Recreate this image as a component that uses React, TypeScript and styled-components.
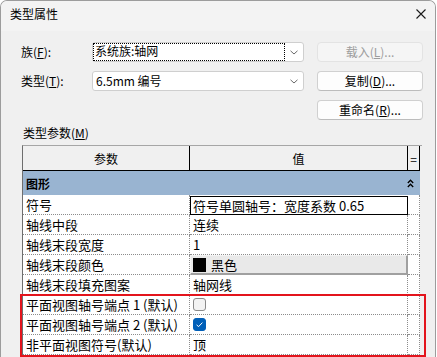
import styled, { createGlobalStyle } from 'styled-components';
import { FC, ReactNode } from 'react';

const GlobalStyle = createGlobalStyle`
  html, body {
    margin: 0;
    padding: 0;
    background: #ffffff;
  }
  body {
    font-family: "Noto Sans CJK SC", "Noto Sans", sans-serif;
    color: #000;
  }
  * { box-sizing: border-box; }
`;

type Param = {
  name: string;
  value?: string;
  kind?: 'text' | 'boxed' | 'color' | 'checkbox';
  checked?: boolean;
};

const params: Param[] = [
  { name: '符号', value: '符号单圆轴号：宽度系数 0.65', kind: 'boxed' },
  { name: '轴线中段', value: '连续' },
  { name: '轴线末段宽度', value: '1' },
  { name: '轴线末段颜色', value: '黑色', kind: 'color' },
  { name: '轴线末段填充图案', value: '轴网线' },
];

const highlighted: Param[] = [
  { name: '平面视图轴号端点 1 (默认)', kind: 'checkbox', checked: false },
  { name: '平面视图轴号端点 2 (默认)', kind: 'checkbox', checked: true },
  { name: '非平面视图符号(默认)', value: '顶' },
];

const CloseIcon = () => (
  <svg width="10" height="10" viewBox="0 0 10 10">
    <path d="M0.5 0.5 L9.5 9.5 M9.5 0.5 L0.5 9.5" stroke="#1a1a1a" strokeWidth="1.1" fill="none" />
  </svg>
);

const ChevronDown = () => (
  <svg width="8" height="5" viewBox="0 0 8 5">
    <path d="M0.5 0.8 L4 4 L7.5 0.8" stroke="#6a6a6a" strokeWidth="1" fill="none" />
  </svg>
);

const CollapseIcon = () => (
  <svg width="7" height="9" viewBox="0 0 7 9">
    <path d="M0.8 4 L3.5 1.2 L6.2 4 M0.8 8 L3.5 5.2 L6.2 8" stroke="#000" strokeWidth="1.3" fill="none" />
  </svg>
);

const CheckMark = () => (
  <svg width="13" height="13" viewBox="0 0 13 13">
    <path d="M3.6 6.9 L5.6 8.6 L9.4 4.6" stroke="#ffffff" strokeWidth="1" fill="none" />
  </svg>
);

const ParamRow: FC<{ p: Param }> = ({ p }) => (
  <Row>
    <NameCell>{p.name}</NameCell>
    {p.kind === 'boxed' && <ValueCell $boxed>{p.value}</ValueCell>}
    {p.kind === 'color' && (
      <ColorCell>
        <Swatch />
        {p.value}
      </ColorCell>
    )}
    {p.kind === 'checkbox' && (
      <ValueCell>
        <CheckBox $checked={!!p.checked}>{p.checked && <CheckMark />}</CheckBox>
      </ValueCell>
    )}
    {(!p.kind || p.kind === 'text') && <ValueCell>{p.value}</ValueCell>}
    <EmptyCell />
  </Row>
);

const Mn: FC<{ children: ReactNode }> = ({ children }) => <Key>{children}</Key>;

export default function App() {
  return (
    <>
      <GlobalStyle />
      <Window>
        <TitleBar>
          <Title>类型属性</Title>
          <CloseIcon />
        </TitleBar>
        <Body>
          <Form>
            <Label>族(<Mn>F</Mn>):</Label>
            <Combo>
              <FocusText>系统族:轴网</FocusText>
              <ChevronDown />
            </Combo>
            <Button disabled>载入(<Mn>L</Mn>)...</Button>

            <Label>类型(<Mn>T</Mn>):</Label>
            <Combo>
              <ComboText>6.5mm 编号</ComboText>
              <ChevronDown />
            </Combo>
            <Button>复制(<Mn>D</Mn>)...</Button>

            <Button style={{ gridColumn: 3 }}>重命名(<Mn>R</Mn>)...</Button>
          </Form>

          <SectionLabel>类型参数(<Mn>M</Mn>)</SectionLabel>

          <Table>
            <HeaderRow>
              <HeaderCell>参数</HeaderCell>
              <HeaderCell>值</HeaderCell>
              <HeaderCell>=</HeaderCell>
            </HeaderRow>
            <GroupRow>
              <span>图形</span>
              <CollapseIcon />
            </GroupRow>
            {params.map((p) => (
              <ParamRow key={p.name} p={p} />
            ))}
            <Highlight>
              {highlighted.map((p) => (
                <ParamRow key={p.name} p={p} />
              ))}
            </Highlight>
          </Table>
        </Body>
      </Window>
    </>
  );
}

const Window = styled.div`
  width: 436px;
  height: 357px;
  overflow: hidden;
  background: #f0f0f0;
  border: 1px solid #9c9c9c;
  border-bottom: none;
  border-radius: 7px 7px 0 0;
`;

const TitleBar = styled.div`
  height: 30px;
  display: flex;
  align-items: center;
  justify-content: space-between;
  padding: 0 9px 4px 9px;
  background: #f3f3f3;
`;

const Title = styled.div`
  font-size: 12px;
  line-height: 14px;
`;

const Body = styled.div`
  padding: 11px 13px 0 19px;
`;

const Form = styled.div`
  display: grid;
  grid-template-columns: 59px 212px 106px;
  grid-auto-rows: 20px;
  column-gap: 13px;
  row-gap: 9px;
`;

const Label = styled.div`
  font-size: 12px;
  line-height: 20px;
  padding-left: 1px;
`;

const Key = styled.span`
  text-decoration: underline;
  text-underline-offset: 1px;
`;

const Combo = styled.div`
  display: flex;
  align-items: center;
  justify-content: space-between;
  padding: 0 5px 0 0;
  background: #ffffff;
  border: 1px solid #cfcfcf;
  border-radius: 3px;
  font-size: 12px;
`;

const FocusText = styled.span`
  width: 192px;
  height: 18px;
  line-height: 16px;
  padding-left: 2px;
  outline: 1px dotted #000;
  outline-offset: -1px;
`;

const ComboText = styled.span`
  padding-left: 3px;
  line-height: 18px;
`;

const Button = styled.button`
  font-family: "Noto Sans CJK SC", "Noto Sans", sans-serif;
  font-size: 12px;
  line-height: 16px;
  padding: 0;
  color: #000;
  background: #fdfdfd;
  border: 1px solid #d0d0d0;
  border-bottom-color: #bcbcbc;
  border-radius: 4px;

  &:disabled {
    color: #9d9d9d;
    background: #f5f5f5;
    border-color: #e3e3e3;
  }
`;

const SectionLabel = styled.div`
  margin-top: 5px;
  padding-left: 3px;
  font-size: 12px;
  line-height: 16px;
`;

const Table = styled.div`
  margin: 4px 0 0 2px;
  width: 400px;
  background: #f0f0f0;
  border-left: 1px solid #6e6e6e;
  border-top: 1px solid #a6a6a6;
`;

const HeaderRow = styled.div`
  display: grid;
  grid-template-columns: 167px 218px 12px;
  width: 397px;
  height: 25px;
  border-bottom: 1px solid #000;
  background: #f0f0f0;
`;

const HeaderCell = styled.div`
  display: flex;
  align-items: center;
  justify-content: center;
  font-size: 12px;
  border-right: 1px solid #000;
`;

const GroupRow = styled.div`
  display: flex;
  align-items: center;
  justify-content: space-between;
  width: 397px;
  height: 24px;
  padding: 0 6px 0 3px;
  background: #99b4d1;
  font-size: 12px;
  font-weight: 700;
`;

const Row = styled.div`
  display: grid;
  grid-template-columns: 167px 218px 12px;
  width: 397px;
  height: 20px;
  background: #ffffff;
  font-size: 13px;
`;

const Cell = styled.div`
  display: flex;
  align-items: center;
  border-right: 1px dotted #8c8c8c;
  border-bottom: 1px dotted #8c8c8c;
  white-space: nowrap;
  overflow: hidden;
`;

const NameCell = styled(Cell)`
  padding-left: 3px;
`;

const ValueCell = styled(Cell)<{ $boxed?: boolean }>`
  padding-left: ${(p) => (p.$boxed ? '2px' : '3px')};
  ${(p) => (p.$boxed ? 'border: 1px solid #000; margin-top: 1px;' : '')}
`;

const ColorCell = styled(Cell)`
  gap: 5px;
  padding-left: 2px;
  background: #e9e9e9;
  border: 1px solid #f4f4f4;
  border-right: 2px solid #a0a0a0;
  border-bottom: 2px solid #a0a0a0;
`;

const Swatch = styled.span`
  width: 13px;
  height: 14px;
  background: #000;
`;

const EmptyCell = styled(Cell)``;

const CheckBox = styled.span<{ $checked: boolean }>`
  display: flex;
  width: 13px;
  height: 13px;
  border-radius: 3px;
  background: ${(p) => (p.$checked ? '#005fb8' : '#f3f3f3')};
  border: 1px solid ${(p) => (p.$checked ? '#005fb8' : '#8a8a8a')};
  align-items: center;
  justify-content: center;

  svg {
    margin: -1px;
  }
`;

const Highlight = styled.div`
  position: relative;

  &::after {
    content: '';
    position: absolute;
    top: -1px;
    bottom: -2px;
    left: -3px;
    right: -4px;
    border: 2px solid #e3141c;
    pointer-events: none;
  }
`;
